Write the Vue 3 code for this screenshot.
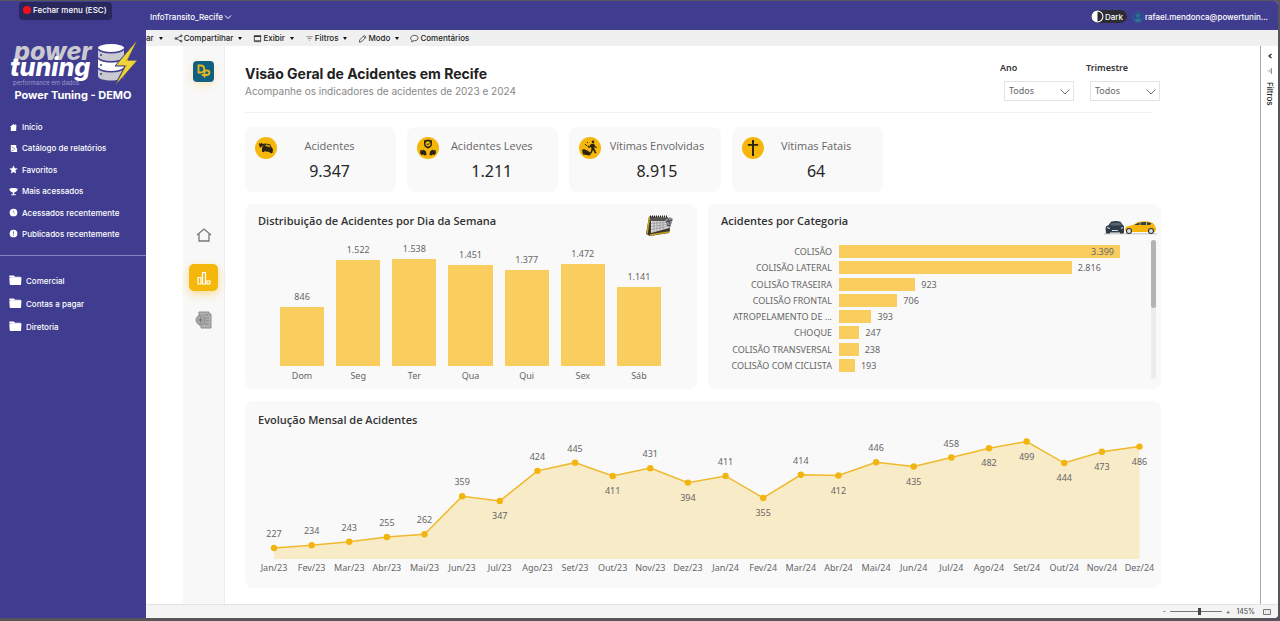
<script setup>
import { ref } from 'vue'

const menu = [
  { label: 'Início', icon: 'home' },
  { label: 'Catálogo de relatórios', icon: 'catalog' },
  { label: 'Favoritos', icon: 'star' },
  { label: 'Mais acessados', icon: 'trophy' },
  { label: 'Acessados recentemente', icon: 'clock' },
  { label: 'Publicados recentemente', icon: 'alert' },
]
const folders = ['Comercial', 'Contas a pagar', 'Diretoria']

const tools = [
  { label: 'ar', caret: true },
  { label: 'Compartilhar', icon: 'share', caret: true },
  { label: 'Exibir', icon: 'view', caret: true },
  { label: 'Filtros', icon: 'filter', caret: true },
  { label: 'Modo', icon: 'pencil', caret: true },
  { label: 'Comentários', icon: 'comment' },
]

const kpis = [
  { label: 'Acidentes', value: '9.347', icon: 'car' },
  { label: 'Acidentes Leves', value: '1.211', icon: 'light' },
  { label: 'Vítimas Envolvidas', value: '8.915', icon: 'victim' },
  { label: 'Vítimas Fatais', value: '64', icon: 'cross' },
]

const days = [
  ['Dom', 846], ['Seg', 1522], ['Ter', 1538], ['Qua', 1451],
  ['Qui', 1377], ['Sex', 1472], ['Sáb', 1141],
]
const categories = [
  ['COLISÃO', 3399], ['COLISÃO LATERAL', 2816], ['COLISÃO TRASEIRA', 923],
  ['COLISÃO FRONTAL', 706], ['ATROPELAMENTO DE ...', 393], ['CHOQUE', 247],
  ['COLISÃO TRANSVERSAL', 238], ['COLISÃO COM CICLISTA', 193],
]
const fmt = (n) => String(n).replace(/(\d)(\d{3})$/, '$1.$2')

const monthNames = ['Jan', 'Fev', 'Mar', 'Abr', 'Mai', 'Jun', 'Jul', 'Ago', 'Set', 'Out', 'Nov', 'Dez']
const totals = [227, 234, 243, 255, 262, 359, 347, 424, 445, 411, 431, 394,
  411, 355, 414, 412, 446, 435, 458, 482, 499, 444, 473, 486]
const below = [6, 9, 11, 13, 15, 17, 19, 20, 21, 22, 23]
const points = totals.map((v, i) => {
  const x = 29 + (i * 865.5) / 23
  const y = 117 - (v - 227) * 0.3915
  return {
    v, x, y,
    labelY: below.includes(i) ? y + 18 : y - 11,
    month: `${monthNames[i % 12]}/${i < 12 ? 23 : 24}`,
  }
})
const line = points.map((p) => `${p.x},${p.y}`).join(' ')
const area = `29,128 ${line} 894.5,128`

const year = ref('Todos')
const quarter = ref('Todos')
const zoom = ref(57)
</script>

<template>
  <div class="window">
    <aside class="sidebar">
      <button class="close-menu"><i class="dot"></i>Fechar menu (ESC)</button>
      <svg class="brand" viewBox="0 0 130 50" role="img" aria-label="Power Tuning">
        <text x="4" y="22" class="b1">power</text>
        <text x="0" y="38" class="b2">tuning</text>
        <text x="3" y="47" class="b3">performance em dados</text>
        <g>
          <path d="M88 9v29c0 6 26 6 26 0V9z" fill="#c9c9cf" />
          <path d="M88 21c5 5 20 5 26 1v9c-7 4-20 3-26-1z" fill="#fff" />
          <ellipse cx="101" cy="10" rx="13" ry="4" fill="#fff" />
          <path d="M88 11c4 5 22 5 26 0M88 20c4 5 22 5 26 0M88 30c4 5 22 5 26 0" fill="none" stroke="#403d90" stroke-width="1.500" />
          <path d="M90 17h2M90 27h2M90 36h2" stroke="#403d90" stroke-width="1.500" />
          <path d="M128 1l-23 27h10l-11 21 24-27h-10z" fill="#c9ab1c" stroke="#403d90" stroke-width="1" />
          <path d="M126 4l-19 23h10l-9 17 18-21h-10z" fill="#ecd43a" />
        </g>
      </svg>
      <strong class="company">Power Tuning - DEMO</strong>
      <nav class="menu">
        <a v-for="m in menu" :key="m.label" href="#">
          <svg viewBox="0 0 10 10" fill="#fff">
            <path v-if="m.icon === 'home'" d="M5 1L1 4.500h1V9h6V4.500h1L8 3.600V1.500H7v1.200z" />
            <g v-else-if="m.icon === 'catalog'"><path d="M2 1h6v3l1 1v4H3L2 8z" /><path d="M3 3l4 3M3 7h2" stroke="#403d90" stroke-width=".7" /></g>
            <path v-else-if="m.icon === 'star'" d="M5 .5l1.400 3 3.200.4L7.200 6.100l.6 3.300L5 7.800 2.200 9.400l.6-3.300L.4 3.900l3.200-.4z" />
            <path v-else-if="m.icon === 'trophy'" d="M2.500 1h5v.8h2C9.500 4.500 8.500 5.300 7 5.500L5.700 6.500V8H7.500v1.200h-5V8h1.800V6.500L3 5.500C1.500 5.300.5 4.500.5 1.800h2z" />
            <g v-else-if="m.icon === 'clock'"><circle cx="5" cy="5" r="4.300" /><path d="M5 2.500V5l1.500 1" stroke="#403d90" stroke-width=".5" fill="none" /></g>
            <g v-else><circle cx="5" cy="5" r="4.300" /><path d="M5 2.500v3M5 6.500v1" stroke="#403d90" stroke-width=".8" /></g>
          </svg>
          {{ m.label }}
        </a>
      </nav>
      <nav class="folders">
        <a v-for="f in folders" :key="f" href="#">
          <svg viewBox="0 0 13 12" fill="#fff"><path d="M0 1.500Q0 .5 1 .5h4l1 1.200h5q1 0 1 1H2z" /><path d="M1 2.500h11.500L12 10H1.500Q.8 10 .7 9L.3 2.500z" /></svg>
          {{ f }}
        </a>
      </nav>
    </aside>

    <div class="main">
      <header class="topbar">
        <button class="report-name">InfoTransito_Recife
          <svg viewBox="0 0 8 8"><path d="M1 2.500l3 3 3-3" fill="none" stroke="#fff" /></svg>
        </button>
        <div class="account">
          <button class="dark-toggle">
            <svg viewBox="0 0 12 12"><circle cx="6" cy="6" r="5" fill="none" stroke="#fff" /><path d="M6 1a5 5 0 0 0 0 10z" fill="#fff" /></svg>Dark
          </button>
          <button class="user">
            <svg viewBox="0 0 12 12"><circle cx="6" cy="6" r="5.300" fill="#31478f" stroke="#2e5c94" /><circle cx="6" cy="4.500" r="2" fill="#2b7590" /><path d="M2.500 9.500c1-3 6-3 7 0-2 2-5 2-7 0z" fill="#2b7590" /></svg>
            rafael.mendonca@powertunin...
          </button>
        </div>
      </header>

      <div class="toolbar">
        <button v-for="t in tools" :key="t.label">
          <svg v-if="t.icon" viewBox="0 0 10 10" fill="none" stroke="#333" stroke-width=".9">
            <g v-if="t.icon === 'share'"><path d="M8 2L2 5l6 3" /><circle cx="8" cy="2" r="1" /><circle cx="2" cy="5" r="1" /><circle cx="8" cy="8" r="1" /></g>
            <g v-else-if="t.icon === 'view'"><path d="M1.500 2h7v6.500h-7zM1.500 7.500h7" /><path d="M1 2.500h8" stroke-width="1.600" /></g>
            <path v-else-if="t.icon === 'filter'" d="M1.500 3h7M3 5h4M4.500 7h1" stroke="#777" />
            <path v-else-if="t.icon === 'pencil'" d="M1.500 9l.5-2.500 5-5 2 2-5 5zM6 2.500l2 2" />
            <path v-else d="M5 1.500c5.300 0 5.300 6 0 6H3.500L2 9V7C-.5 5 1 1.500 5 1.500z" />
          </svg>
          <span>{{ t.label }}</span>
          <i v-if="t.caret" class="caret"></i>
        </button>
      </div>

      <div class="workspace">
        <nav class="rail">
          <a class="rail-logo" href="#" aria-label="Painel">
            <svg viewBox="0 0 21 21" fill="none" stroke="#e8b71c" stroke-width="1.800"><path d="M5.500 4.500v7h2.300c4.500 0 4.500-7 0-7zM11.500 16.500V9.500h2.300c3.500 0 3.500 4.500 0 4.500h-5" /></svg>
          </a>
          <a class="rail-home" href="#" aria-label="Início">
            <svg viewBox="0 0 16 16" fill="none" stroke="#777" stroke-width="1.300"><path d="M1 8l7-6 7 6M3 7v7h10V7" /></svg>
          </a>
          <a class="rail-active" href="#" aria-label="Gráficos">
            <svg viewBox="0 0 16 16" fill="none" stroke="#fff" stroke-width="1.200"><path d="M2 7.500h3V14H2zM6.500 2.500h3V14h-3zM11 11h3v3h-3z" /></svg>
          </a>
          <a class="rail-doc" href="#" aria-label="Relatório">
            <svg viewBox="0 0 18 18"><path d="M4 1h10v2h2v14H6v-3H4z" fill="#b0b0b0" stroke="#8c8c8c" /><path d="M9 4h4M10 7h4M11 10h3M9 13h5" stroke="#858585" /><circle cx="5.500" cy="9" r="4.500" fill="#aaa" stroke="#8a8a8a" /><path d="M5.500 6.500v5M3 9h5" stroke="#777" /></svg>
          </a>
        </nav>

        <main class="report">
          <div class="heading">
            <div class="titles">
              <h1>Visão Geral de Acidentes em Recife</h1>
              <p>Acompanhe os indicadores de acidentes de 2023 e 2024</p>
            </div>
            <div class="slicers">
              <div class="slicer">
                <label for="ano">Ano</label>
                <div class="select-box">
                  <select id="ano" v-model="year"><option>Todos</option></select>
                  <svg viewBox="0 0 10 6"><path d="M.5.5L5 5 9.500.5" fill="none" stroke="#666" stroke-width=".9" /></svg>
                </div>
              </div>
              <div class="slicer">
                <label for="tri">Trimestre</label>
                <div class="select-box">
                  <select id="tri" v-model="quarter"><option>Todos</option></select>
                  <svg viewBox="0 0 10 6"><path d="M.5.5L5 5 9.500.5" fill="none" stroke="#666" stroke-width=".9" /></svg>
                </div>
              </div>
            </div>
          </div>

          <div class="kpis">
            <section v-for="k in kpis" :key="k.label" class="kpi">
              <svg viewBox="0 0 22 22">
                <circle cx="11" cy="11" r="11" fill="#f5b70c" />
                <g v-if="k.icon === 'car'" fill="#2b2312"><path d="M8 9l2-2.500 5 .8L17 11l1 1-.5 4-2 .3-1-1.300-5-.8-1 1-1.500-.4V11z" /><path d="M4 6l2 1 .5-1.500L8 7l2-.5-2 2.500-1.500.5L6 11l-1-1.500-1 .5.500-1.500L4 8z" /><path d="M10 9l1-1.500 3.500.6 1 2.400z" fill="#d29a0a" /></g>
                <g v-else-if="k.icon === 'light'"><path d="M7 3.500l4-1 4 1v3.500c0 2-1.500 3.500-4 4.500-2.500-1-4-2.500-4-4.500z" fill="#2b2312" /><circle cx="11" cy="6.800" r="2.600" fill="#f5b70c" /><path d="M9.500 6.800l1.200 1.200 2-2.200" fill="none" stroke="#2b2312" /><path d="M3.500 13l2 .5 1-1 2.500 2 .5 3.500-2 .5-1-1-2 .5-1.500-2zM18.500 13l-2 .5-1-1-2.500 2-.5 3.500 2 .5 1-1 2 .5 1.500-2z" fill="#2b2312" /></g>
                <g v-else-if="k.icon === 'victim'" fill="#2b2312"><circle cx="14" cy="4.800" r="1.300" /><path d="M12 7l3-.5 1 2.500 2 1-.5 1-2.500-1 1 3 1.500 3-1.500.5-2-3.500-1.500 3.500-1.300-.5 1.300-4-.5-2-2.500 1-1-2 1-.5.500 1z" /><path d="M3 13l2-1 4 2 3 2-1 2.500-7-1z" /><path d="M6 7l2 2M8 5l1 1" stroke="#2b2312" /></g>
                <path v-else d="M10 3h2v4h4.200v1.800H12V19h-2V8.800H5.800V7H10z" fill="#2b2312" />
              </svg>
              <div class="kpi-text"><h3>{{ k.label }}</h3><b>{{ k.value }}</b></div>
            </section>
          </div>

          <div class="charts">
            <section class="panel">
              <div class="panel-head">
                <h2>Distribuição de Acidentes por Dia da Semana</h2>
                <svg class="calendar" viewBox="0 0 28 22">
                  <path d="M3 1.500L0 19l4 2 19-3 1-3L22 2z" fill="#39372f" />
                  <path d="M5 3l16-1 2 11-18 5z" fill="#d8d8d8" />
                  <path d="M4 2.500h18v3.500H4z" fill="#54534e" />
                  <path d="M3.500 2L1 19M4 20l19-3" stroke="#c8a01e" stroke-width="1.500" />
                  <path d="M5 8.500l16-1M5 11.500l17-2M5 14.500l17-3M8 6v11M11 6v10M14 6v10M17 6v9" stroke="#85858a" stroke-width=".6" />
                  <path d="M4 1.500h18" stroke="#222" stroke-width="2" stroke-dasharray="1 1" />
                  <path d="M19 5l5-3 3 2-2 6-4 1z" fill="#8b8d92" /><path d="M20 7l6-2M22 4l2 5M21 10l4 1" stroke="#444" />
                </svg>
              </div>
              <div class="columns">
                <div v-for="[d, v] in days" :key="d" class="column">
                  <span>{{ fmt(v) }}</span>
                  <div class="bar" :style="{ height: v * 0.0696 + 'px' }"></div>
                  <em>{{ d }}</em>
                </div>
              </div>
            </section>

            <section class="panel">
              <div class="panel-head">
                <h2>Acidentes por Categoria</h2>
                <svg class="cars" viewBox="0 0 53 15">
                  <path d="M0 13.800h53" stroke="#999" stroke-width=".6" />
                  <path d="M1.500 8l1-2 2-.8L7 1.800q5-1.500 9.500 0l2.500 3.400 1 1v6.300l-1 1h-3v-1H6v1H2z" fill="#2c3b47" />
                  <path d="M7.500 2.800h9l1.500 2.700h-12z" fill="#56656f" /><path d="M3 7.500l3 1M19 7.500l-2 1" stroke="#d4dce0" stroke-width="1.200" /><path d="M8 10.500h6" stroke="#ddd" stroke-width="1.200" />
                  <path d="M21 9l1.500-2.500L29 5l5-3q9-2 15 1l2 3 1 3-1 3H22z" fill="#f5b50a" />
                  <path d="M30 5l5-2.500q8-1.500 12.500.8L46 5z" fill="#30414b" /><path d="M36 2V5M42.500 1.800V5" stroke="#f5b50a" />
                  <g fill="#ddd" stroke="#34383b" stroke-width="1.100"><circle cx="25" cy="11" r="2.500" /><circle cx="47" cy="11" r="2.500" /></g>
                </svg>
              </div>
              <div class="category-body">
                <div class="rows">
                  <div v-for="([c, v], i) in categories" :key="c" class="row">
                    <span class="row-label">{{ c }}</span>
                    <div class="track">
                      <div class="hbar" :style="{ width: (v / 3399) * 100 + '%' }"><span v-if="i === 0">{{ fmt(v) }}</span></div>
                      <span v-if="i > 0">{{ fmt(v) }}</span>
                    </div>
                  </div>
                </div>
                <div class="scroll"><i></i></div>
              </div>
            </section>
          </div>

          <section class="panel evolution">
            <div class="panel-head"><h2>Evolução Mensal de Acidentes</h2></div>
            <svg class="line-chart" viewBox="0 0 916 145">
              <polygon :points="area" fill="#f8ebc8" />
              <polyline :points="line" fill="none" stroke="#f0b92b" stroke-width="1.500" />
              <g v-for="p in points" :key="p.month">
                <circle :cx="p.x" :cy="p.y" r="3.200" fill="#f2b50f" />
                <text :x="p.x" :y="p.labelY">{{ p.v }}</text>
                <text :x="p.x" y="140">{{ p.month }}</text>
              </g>
            </svg>
          </section>
        </main>

        <aside class="filters">
          <button aria-label="Expandir filtros"><svg viewBox="0 0 6 8"><path d="M4.500 2L2 4l2.500 2" fill="none" stroke="#222" stroke-width="1.200" /></svg></button>
          <svg viewBox="0 0 6 8"><path d="M4.500 1v6M3 2.500v3M1 3.500v1" stroke="#777" stroke-width=".8" /></svg>
          <span>Filtros</span>
        </aside>
      </div>

      <footer class="status">
        <button aria-label="Reduzir zoom">-</button>
        <input v-model="zoom" type="range" min="0" max="100" aria-label="Zoom">
        <button aria-label="Aumentar zoom">+</button>
        <span>145%</span>
        <button aria-label="Ajustar à página"><svg viewBox="0 0 8 6"><path d="M.5.5h7v5h-7z" fill="none" stroke="#777" /><path d="M2 2h1M5 2h1M2 4h1M5 4h1" stroke="#999" stroke-width=".6" /></svg></button>
      </footer>
    </div>
  </div>
</template>

<style>
body { margin: 0; background: #56555c; }
</style>

<style scoped>
* { box-sizing: border-box; }
button { border: 0; background: none; padding: 0; font: inherit; color: inherit; display: flex; align-items: center; }
a { color: inherit; text-decoration: none; }
h1, h2, h3, p { margin: 0; }
svg { flex: none; display: block; }
.window { display: flex; min-height: 100vh; padding: 1px 2px 3px 0; background: #56555c; font-family: Inter, "Liberation Sans", sans-serif; font-size: 8px; line-height: 12px; }
.sidebar { width: 146px; flex: none; background: #403d90; color: #fff; font-weight: 500; display: flex; flex-direction: column; }
.close-menu { align-self: flex-start; margin: 1px 0 0 19px; height: 18px; padding: 0 5px 2px 4px; gap: 2px; background: #29285d; border-radius: 4px; white-space: nowrap; }
.dot { width: 8px; height: 8px; border-radius: 50%; background: #f0101c; }
.brand { width: 130px; height: 50px; margin: 18px 0 0 10px; overflow: visible; }
.brand text { font-family: Inter, sans-serif; font-weight: 800; font-style: italic; }
.brand .b1 { font-size: 25px; fill: #c9c9cf; }
.brand .b2 { font-size: 25px; fill: #fff; }
.brand .b3 { font-style: normal; font-weight: 400; font-size: 6px; fill: #9b99cb; }
.company { font-size: 11px; line-height: 14px; text-align: center; font-weight: 700; }
.menu { display: flex; flex-direction: column; justify-content: space-between; height: 119px; margin-top: 19px; }
.menu a, .folders a { display: flex; align-items: center; gap: 4px; padding-left: 9px; white-space: nowrap; }
.menu svg { width: 9px; height: 9px; }
.folders { border-top: 1px solid #8583bd; margin-top: 15px; padding-top: 19px; display: flex; flex-direction: column; gap: 11px; }
.folders svg { width: 13px; height: 12px; }

.main { flex: 1; min-width: 0; display: flex; flex-direction: column; background: #fff; border-radius: 0 4px 4px 0; overflow: hidden; }
.topbar { height: 29px; background: #403d90; color: #fff; display: flex; justify-content: space-between; align-items: center; padding: 2px 10px 0 4px; font-weight: 500; }
.report-name { gap: 1px; }
.report-name svg { width: 8px; height: 8px; }
.account { display: flex; gap: 5px; align-items: center; }
.dark-toggle { height: 13px; background: #2c2c33; border-radius: 7px; padding: 0 4px 0 0; gap: 1px; }
.dark-toggle svg { width: 13px; height: 13px; }
.user { gap: 1px; white-space: nowrap; }
.user svg { width: 12px; height: 12px; }
.toolbar { height: 16px; background: #f0f0f0; display: flex; align-items: center; gap: 11px; color: #222; overflow: hidden; font-weight: 500; }
.toolbar svg { width: 9px; height: 9px; margin-right: 1px; }
.caret { border: 2px solid transparent; border-top: 3px solid #111; border-bottom: 0; margin-left: 5px; }

.workspace { flex: 1; display: flex; }
.rail { width: 42px; flex: none; margin-left: 37px; background: #f8f8f8; border-right: 1px solid #ededed; display: flex; flex-direction: column; align-items: center; }
.rail-logo { margin-top: 15px; width: 21px; height: 21px; border-radius: 4px; background: #12607f; box-shadow: 0 3px 8px #fbe6bd; }
.rail-home { margin-top: 145px; }
.rail-home svg { width: 16px; height: 16px; }
.rail-active { margin-top: 21px; width: 29px; height: 27px; border-radius: 5px; background: #f5b70c; display: flex; align-items: center; justify-content: center; box-shadow: 0 3px 9px #f9dc92; }
.rail-active svg { width: 16px; height: 16px; }
.rail-doc { margin-top: 20px; }
.rail-doc svg { width: 18px; height: 18px; }

.report { flex: 1; min-width: 0; margin: 0 99px 0 20px; padding-bottom: 15px; color: #666; font-family: "Noto Sans", sans-serif; font-size: 9px; }
.heading { height: 67px; border-bottom: 1px solid #f1f1f1; display: flex; justify-content: space-between; margin-right: 9px; }
.titles { padding-top: 19px; font-family: Inter, sans-serif; white-space: nowrap; }
h1 { font-size: 14px; line-height: 18px; font-weight: 700; color: #222; }
.titles p { font-size: 10px; line-height: 17px; color: #888; }
.slicers { display: flex; gap: 12px; padding-top: 16px; margin-right: -8px; }
.slicer { width: 74px; }
.slicer label { display: block; font-weight: 600; color: #333; }
.select-box { position: relative; margin: 7px 0 0 4px; }
select { appearance: none; width: 70px; height: 20px; padding: 0 4px; border: 1px solid #e4e4e4; border-radius: 0; background: #fff; color: #666; font: inherit; }
.select-box svg { position: absolute; right: 4px; top: 8px; width: 10px; height: 6px; }

.kpis { display: grid; grid-template-columns: repeat(4, 151fr) 267fr; gap: 11px; margin-top: 14px; }
.kpi { height: 65px; background: #f9f9f9; border-radius: 8px; display: flex; padding: 10px 14px 10px 10px; }
.kpi > svg { width: 22px; height: 22px; }
.kpi-text { flex: 1; text-align: center; white-space: nowrap; }
.kpi h3 { font-family: "Open Sans", sans-serif; font-size: 11px; line-height: 18px; font-weight: 400; color: #666; }
.kpi b { display: block; font-size: 16px; line-height: 20px; margin-top: 6px; font-weight: 400; color: #252525; }
.kpi:nth-child(3) { padding-right: 8px; }

.charts { display: grid; grid-template-columns: 452fr 453fr; gap: 11px; margin-top: 12px; }
.panel { background: #f9f9f9; border-radius: 8px; min-width: 0; }
.panel-head { display: flex; justify-content: space-between; height: 36px; padding: 9px 4px 0 13px; }
h2 { font-family: "Open Sans", sans-serif; font-size: 11px; line-height: 16px; font-weight: 600; color: #333; white-space: nowrap; }
.calendar { width: 28px; height: 22px; margin: 2px 19px 0 0; }
.cars { width: 53px; height: 15px; margin-top: 7px; }
.columns { display: grid; grid-template-columns: repeat(7, 1fr); gap: 12px; align-items: end; height: 149px; padding: 0 36px 7px 35px; }
.column { text-align: center; }
.column span { display: block; margin-bottom: 4px; }
.bar { background: #f9ce5f; }
.column em { display: block; font-style: normal; margin-top: 4px; }
.category-body { display: flex; padding: 0 5px 10px 13px; }
.rows { flex: 1; height: 127px; margin-top: 5px; display: flex; flex-direction: column; justify-content: space-between; }
.row { display: flex; gap: 7px; height: 13px; line-height: 13px; white-space: nowrap; }
.row-label { width: 111px; text-align: right; }
.track { flex: 1; display: flex; gap: 6px; margin-right: 31px; }
.hbar { background: #f9ce5f; flex: none; text-align: right; padding-right: 6px; }
.scroll { width: 5px; height: 139px; background: #ececec; border-radius: 3px; }
.scroll i { display: block; height: 68px; background: #b3b3b3; border-radius: 3px; }
.evolution { margin-top: 12px; padding-bottom: 12px; }
.evolution .panel-head { height: 30px; padding-top: 11px; }
.line-chart { width: 100%; height: auto; overflow: visible; }
.line-chart text { font-size: 9px; fill: #666; text-anchor: middle; }

.filters { width: 18px; flex: none; border-left: 1px solid #aaa; display: flex; flex-direction: column; align-items: center; padding-top: 6px; gap: 7px; }
.filters svg { width: 6px; height: 8px; }
.filters span { writing-mode: vertical-rl; font-weight: 500; color: #222; }
.status { height: 14px; background: #f4f4f4; border-top: 1px solid #e2e2e2; display: flex; align-items: center; justify-content: flex-end; gap: 4px; padding-right: 7px; color: #444; font-size: 7px; }
.status input { appearance: none; width: 52px; height: 8px; margin: 0; background: linear-gradient(#777, #777) center / 100% 1px no-repeat; }
.status input::-webkit-slider-thumb { appearance: none; width: 3px; height: 7px; background: #444; }
.status span { margin: 0 4px 0 2px; }
.status svg { width: 8px; height: 6px; }
</style>
